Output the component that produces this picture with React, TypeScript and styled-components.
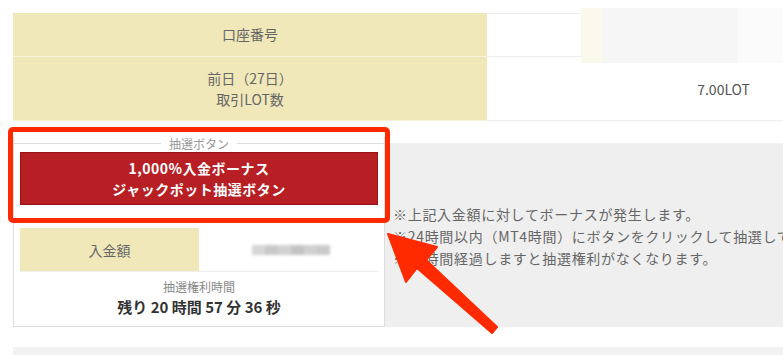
import React from 'react'
import styled, { createGlobalStyle } from 'styled-components'

const GlobalStyle = createGlobalStyle`
  html, body {
    margin: 0;
    padding: 0;
    background: #ffffff;
  }
  body {
    font-family: 'Noto Sans CJK JP', 'Noto Sans', sans-serif;
    color: #666666;
  }
`

const notes = [
  '※上記入金額に対してボーナスが発生します。',
  '※24時間以内（MT4時間）にボタンをクリックして抽選してください。',
  '※24時間経過しますと抽選権利がなくなります。'
]

const App: React.FC = () => {
  return (
    <Page>
      <GlobalStyle />
      <InfoTable>
        <TableRow $height={44}>
          <LabelCell>口座番号</LabelCell>
          <ValueCell $first>
            <Redacted />
          </ValueCell>
        </TableRow>
        <TableRow $height={64}>
          <LabelCell>
            前日（27日）
            <br />
            取引LOT数
          </LabelCell>
          <ValueCell>
            <LotValue>7.00LOT</LotValue>
          </ValueCell>
        </TableRow>
      </InfoTable>

      <LotterySection>
        <Card>
          <Legend>抽選ボタン</Legend>
          <LotteryButton>
            1,000%入金ボーナス
            <br />
            ジャックポット抽選ボタン
          </LotteryButton>
          <DepositRow>
            <DepositLabel>入金額</DepositLabel>
            <DepositValue>
              <BlurAmount>
                <BlurDot $shade="#d6d6d6" />
                <BlurDot $shade="#c8c8c8" />
                <BlurDot $shade="#d2d2d2" />
                <BlurDot $shade="#c4c4c4" />
                <BlurDot $shade="#d0d0d0" />
                <BlurDot $shade="#cacaca" />
              </BlurAmount>
            </DepositValue>
          </DepositRow>
          <TimerBlock>
            <TimerLabel>抽選権利時間</TimerLabel>
            <TimerValue>残り 20 時間 57 分 36 秒</TimerValue>
          </TimerBlock>
        </Card>
        <NotesPanel>
          {notes.map((n) => (
            <Note key={n}>{n}</Note>
          ))}
        </NotesPanel>
      </LotterySection>

      <FooterBar />

      <Highlight />
      <Arrow viewBox="0 0 783 355" width="783" height="355">
        <polygon
          points="388,234 437,247 426,260 497,327 492,333 417,268 406,282"
          fill="#ff2a00"
          stroke="#ff2a00"
          strokeWidth="2"
          strokeLinejoin="round"
        />
      </Arrow>
    </Page>
  )
}

const Page = styled.div`
  position: relative;
  width: 783px;
  height: 355px;
  overflow: hidden;
  padding: 13px 0 0 13px;
  box-sizing: border-box;
`

const InfoTable = styled.div`
  display: flex;
  flex-direction: column;
  width: 770px;
`

const TableRow = styled.div<{ $height: number }>`
  display: flex;
  height: ${(p) => p.$height}px;
`

const LabelCell = styled.div`
  width: 474px;
  flex-shrink: 0;
  background: #f0e8b9;
  border-bottom: 1px solid #f8f2d6;
  display: flex;
  align-items: center;
  justify-content: center;
  text-align: center;
  font-size: 14px;
  line-height: 21px;
  color: #666666;
  box-sizing: border-box;
`

const ValueCell = styled.div<{ $first?: boolean }>`
  position: relative;
  flex: 1;
  display: flex;
  align-items: center;
  justify-content: flex-end;
  border-top: ${(p) => (p.$first ? '1px solid #eeeeee' : 'none')};
  border-bottom: 1px solid #eeeeee;
  box-sizing: border-box;
`

const Redacted = styled.div`
  position: absolute;
  left: 94px;
  top: -6px;
  width: 157px;
  height: 55px;
  background: linear-gradient(90deg, #fbf9ec 0, #fbf9ec 22px, #f6f6f6 22px);
  box-shadow: 45px 0 0 #fbfbfb;
`

const LotValue = styled.span`
  font-size: 14px;
  color: #555555;
  padding-right: 33px;
`

const LotterySection = styled.div`
  display: flex;
  margin-top: 16px;
  width: 770px;
`

const Card = styled.div`
  width: 372px;
  flex-shrink: 0;
  border: 1px solid #dddddd;
  border-top: none;
  box-sizing: border-box;
  padding: 0 6px;
  display: flex;
  flex-direction: column;
  height: 190px;
`

const Legend = styled.div`
  display: flex;
  align-items: center;
  gap: 8px;
  height: 12px;
  margin: 0 -6px;
  font-size: 12px;
  color: #999999;
  white-space: nowrap;

  &::before,
  &::after {
    content: '';
    flex: 1;
    border-top: 1px solid #dddddd;
  }
`

const LotteryButton = styled.button`
  margin-top: 3px;
  height: 53px;
  width: 100%;
  background: #b71f24;
  border: 1px solid #951418;
  color: #ffffff;
  font-family: inherit;
  font-weight: 700;
  font-size: 14px;
  line-height: 21px;
  letter-spacing: 0.5px;
  cursor: pointer;
`

const DepositRow = styled.div`
  margin-top: 23px;
  display: flex;
  height: 43px;
  border-bottom: 1px solid #eeeeee;
`

const DepositLabel = styled.div`
  width: 179px;
  background: #f0e8b9;
  display: flex;
  align-items: center;
  justify-content: center;
  font-size: 14px;
  color: #666666;
`

const DepositValue = styled.div`
  flex: 1;
  display: flex;
  align-items: center;
  justify-content: center;
`

const BlurAmount = styled.div`
  display: flex;
  filter: blur(1.5px);
  margin-left: 4px;
`

const BlurDot = styled.span<{ $shade: string }>`
  width: 13px;
  height: 10px;
  background: ${(p) => p.$shade};
`

const TimerBlock = styled.div`
  flex: 1;
  display: flex;
  flex-direction: column;
  align-items: center;
  justify-content: center;
  padding-bottom: 2px;
`

const TimerLabel = styled.div`
  font-size: 12px;
  line-height: 18px;
  color: #888888;
`

const TimerValue = styled.div`
  font-size: 15px;
  line-height: 22px;
  font-weight: 700;
  color: #333333;
`

const NotesPanel = styled.div`
  flex: 1;
  margin-top: 6px;
  height: 184px;
  background: #efefef;
  padding: 60px 0 0 8px;
  box-sizing: border-box;
  white-space: nowrap;
  overflow: hidden;
`

const Note = styled.div`
  font-size: 14px;
  line-height: 22px;
  letter-spacing: 0.7px;
  color: #666666;
`

const FooterBar = styled.div`
  margin-top: 20px;
  height: 10px;
  width: 770px;
  background: #f2f2f2;
`

const Highlight = styled.div`
  position: absolute;
  left: 8px;
  top: 127px;
  width: 382px;
  height: 96px;
  border: 5px solid #ff2a00;
  border-radius: 5px;
  box-sizing: border-box;
`

const Arrow = styled.svg`
  position: absolute;
  left: 0;
  top: 0;
  pointer-events: none;
`

export default App
